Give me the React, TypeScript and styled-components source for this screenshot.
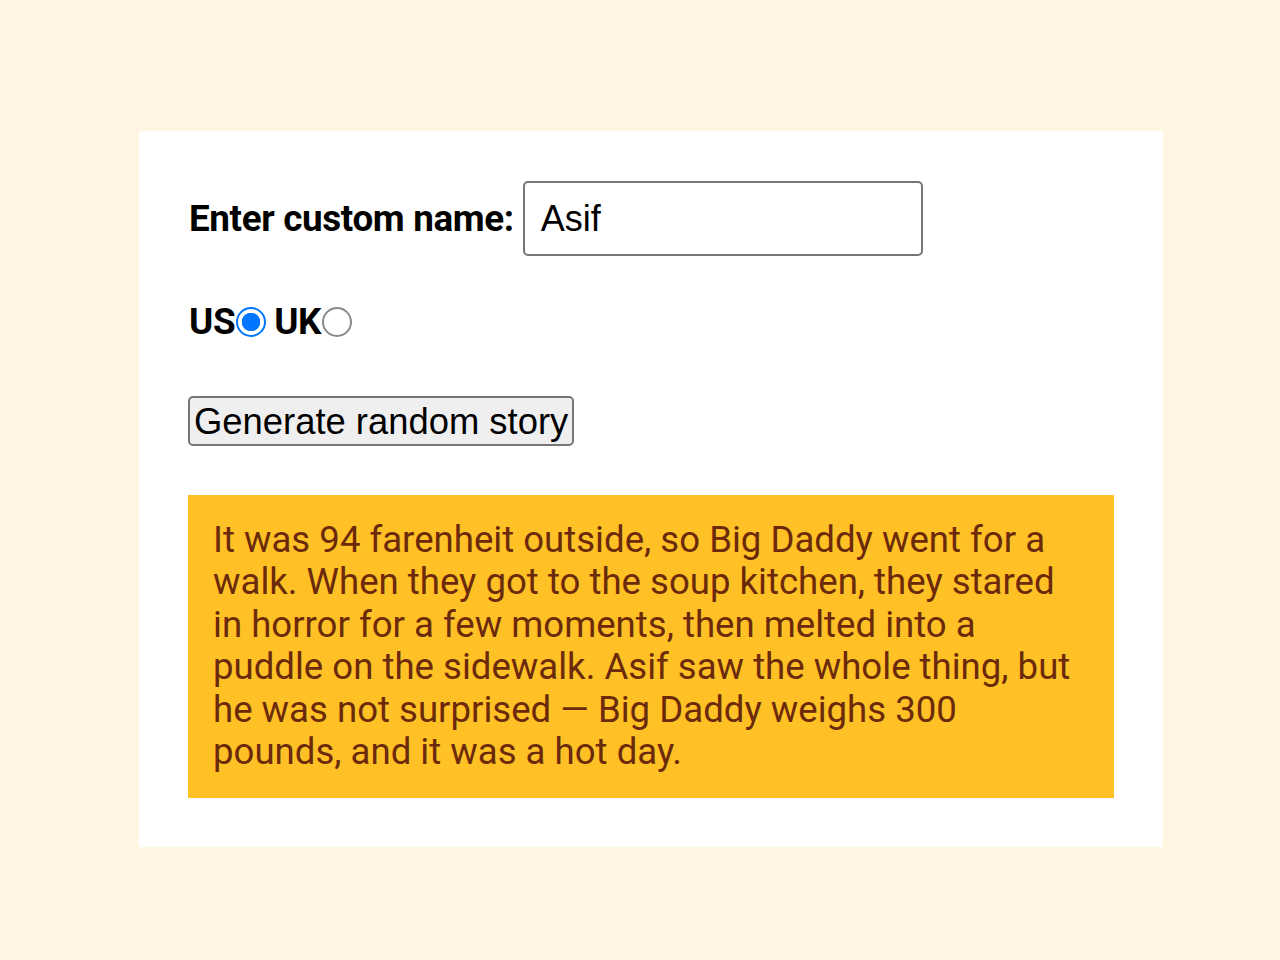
import React, { useState } from 'react';
import styled, { createGlobalStyle } from 'styled-components';

const GlobalStyle = createGlobalStyle`
  html, body {
    margin: 0;
    padding: 0;
    background: #fff6e2;
  }
  body {
    font-family: Roboto, "Liberation Sans", Arial, sans-serif;
  }
`;

const Page = styled.div`
  min-height: 960px;
  padding: 131px 117px 0 139px;
  box-sizing: border-box;
`;

const Card = styled.div`
  background: #ffffff;
  padding: 50px 49px 49px 50px;
  display: flex;
  flex-direction: column;
  align-items: flex-start;
`;

const Row = styled.div`
  display: flex;
  align-items: center;
`;

const NameRow = styled(Row)`
  margin-bottom: 44px;
`;

const RadioRow = styled(Row)`
  margin-bottom: 53px;
`;

const Label = styled.label`
  font-size: 36.8px;
  font-weight: 700;
  color: #000;
  letter-spacing: -0.35px;
  display: inline-flex;
  align-items: center;
`;

const NameInput = styled.input`
  margin-left: 9px;
  width: 400px;
  height: 75px;
  box-sizing: border-box;
  border: 2px solid #767676;
  border-radius: 5px;
  padding: 0 16px;
  font-family: "Liberation Sans", Arial, sans-serif;
  font-size: 36px;
  color: #000;
  outline: none;
`;

const Radio = styled.input`
  appearance: none;
  width: 30px;
  height: 30px;
  margin: 0 8px 0 1px;
  box-sizing: border-box;
  border-radius: 50%;
  border: 2.5px solid ${(p) => (p.checked ? '#0075ff' : '#8a8a8a')};
  background: ${(p) => (p.checked ? 'radial-gradient(circle, #0075ff 0 9px, #fff 9.5px)' : '#fff')};
`;

const GenerateButton = styled.button`
  font-family: "Liberation Sans", Arial, sans-serif;
  font-size: 36.4px;
  color: #000;
  background: #efefef;
  border: 2px solid #767676;
  border-radius: 5px;
  height: 50px;
  padding: 2px 4px 0;
  margin: 0 0 49px -1px;
  line-height: 1;
`;

const Story = styled.p`
  align-self: stretch;
  margin: 0 0 0 -1px;
  background: #ffc125;
  color: #6b2a0b;
  font-size: 36.6px;
  line-height: 42.4px;
  padding: 24px 25px 25px 25px;
`;

const App = () => {
  const [name, setName] = useState('Asif');
  const [country, setCountry] = useState('us');

  return (
    <>
      <GlobalStyle />
      <Page>
        <Card>
          <NameRow>
            <Label htmlFor="customname">Enter custom name:</Label>
            <NameInput id="customname" type="text" value={name} onChange={(e) => setName(e.target.value)} />
          </NameRow>
          <RadioRow>
            <Label>
              US
              <Radio type="radio" name="ukus" checked={country === 'us'} onChange={() => setCountry('us')} />
            </Label>
            <Label>
              UK
              <Radio type="radio" name="ukus" checked={country === 'uk'} onChange={() => setCountry('uk')} />
            </Label>
          </RadioRow>
          <GenerateButton>Generate random story</GenerateButton>
          <Story>
            It was 94 farenheit outside, so Big Daddy went for a walk. When they got to the soup kitchen, they stared
            in horror for a few moments, then melted into a puddle on the sidewalk. {name} saw the whole thing, but he
            was not surprised — Big Daddy weighs 300 pounds, and it was a hot day.
          </Story>
        </Card>
      </Page>
    </>
  );
};

export default App;
